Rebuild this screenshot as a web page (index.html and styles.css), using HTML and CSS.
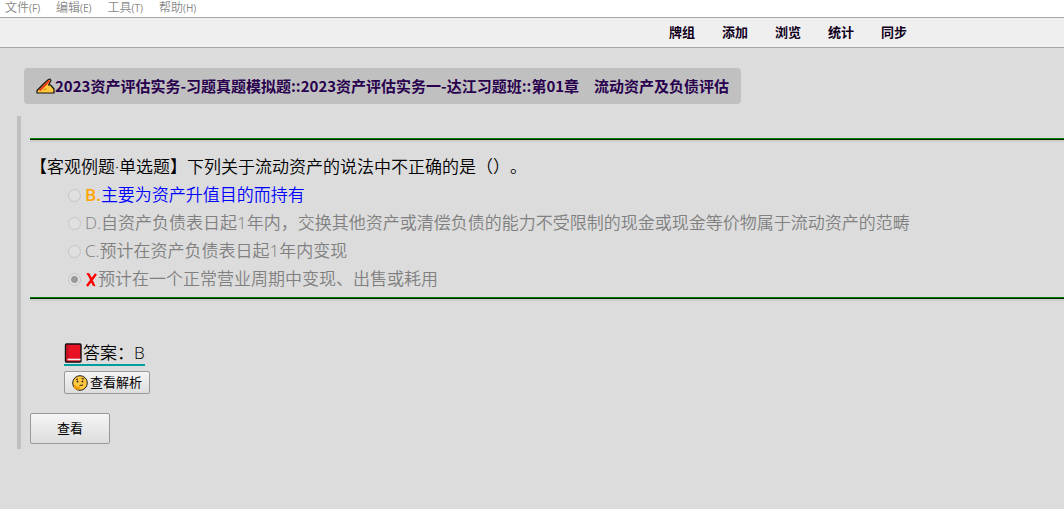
FILE: index.html
```html
<!DOCTYPE html>
<html lang="zh-CN">
<head>
    <meta charset="UTF-8">
    <meta name="viewport" content="width=device-width, initial-scale=1.0">
    <title>Anki</title>
    <link rel="stylesheet" href="styles.css">
</head>
<body>
    <header>
        <div class="menubar">
            <button type="button">文件<small>(F)</small></button>
            <button type="button">编辑<small>(E)</small></button>
            <button type="button">工具<small>(T)</small></button>
            <button type="button">帮助<small>(H)</small></button>
        </div>
        <nav class="toolbar">
            <a href="#">牌组</a>
            <a href="#">添加</a>
            <a href="#">浏览</a>
            <a href="#">统计</a>
            <a href="#">同步</a>
        </nav>
    </header>

    <main>
        <a class="deck" href="#">
            <svg class="icon" viewBox="0 0 19 18" aria-hidden="true">
                <path d="M1 16V13.500L8 6.500l4.500-4 1.500-.5 1 1.500-2.500 4.500h2l3.500 4V16z" fill="#ffc83d" stroke="#111" stroke-width="1.200" stroke-linejoin="round"/>
                <path d="M3.500 13.500 13.500 3.500" stroke="#e8381c" stroke-width="2"/>
                <path d="M7.500 12.500l3-.5" stroke="#d67d00" stroke-width="1" fill="none"/>
            </svg>
            <span>2023资产评估实务-习题真题模拟题::2023资产评估实务一-达江习题班::第01章　流动资产及负债评估</span>
        </a>

        <div class="card">
            <hr>
            <fieldset class="question">
                <legend>【客观例题·单选题】下列关于流动资产的说法中不正确的是（）。</legend>
                <label class="option correct">
                    <input type="radio" name="answer" disabled>
                    <span><b>B.</b>主要为资产升值目的而持有</span>
                </label>
                <label class="option">
                    <input type="radio" name="answer" disabled>
                    <span>D.自资产负债表日起1年内，交换其他资产或清偿负债的能力不受限制的现金或现金等价物属于流动资产的范畴</span>
                </label>
                <label class="option">
                    <input type="radio" name="answer" disabled>
                    <span>C.预计在资产负债表日起1年内变现</span>
                </label>
                <label class="option">
                    <input type="radio" name="answer" checked disabled>
                    <svg class="cross" viewBox="0 0 13 16" aria-hidden="true">
                        <path d="M2 3.500Q3.500 2.500 4.500 5L8 12.500Q8.500 14.500 10 14M11 3 2 15" fill="none" stroke="#f00" stroke-width="2.400"/>
                    </svg>
                    <span>预计在一个正常营业周期中变现、出售或耗用</span>
                </label>
            </fieldset>
            <hr>

            <div class="result">
                <p class="answer">
                    <svg class="book" viewBox="0 0 19 20" aria-hidden="true">
                        <rect x="1.500" y="1" width="15.500" height="18" rx="1" fill="#e81224" stroke="#111" stroke-width="1.400"/>
                        <path d="M4 1.500v14" stroke="#a80d1a" stroke-width="1"/>
                        <path d="M3.500 16.500h13" stroke="#f2f2f2" stroke-width="1.600"/>
                    </svg>
                    <span>答案：B</span>
                </p>
                <button type="button" class="explain">
                    <svg class="face" viewBox="0 0 16 16" aria-hidden="true">
                        <circle cx="8" cy="8" r="7.300" fill="#ffc83d" stroke="#222" stroke-width="1"/>
                        <circle cx="5.500" cy="6.500" r=".9" fill="#222"/>
                        <circle cx="10.500" cy="6.500" r=".9" fill="#222"/>
                        <path d="M4 4.500 6 4M9.500 3.500l2.500.5M7.500 10.500l3.500-.5" stroke="#222" stroke-width="1" fill="none"/>
                        <path d="M2 13.500v-3l1.500-.5 1 1.500 3.500.5v1L6 15z" fill="#f59b00"/>
                    </svg>
                    <span>查看解析</span>
                </button>
            </div>

            <button type="button" class="view">查看</button>
        </div>
    </main>
</body>
</html>
```
FILE: styles.css
```css
:root {
    --background-color: #dcdcdc;
    --border-color: #a6a6a6;
    --bar-color: #c0c0c0;
    --muted-color: #808080;
}

* {
    margin: 0;
    padding: 0;
    box-sizing: border-box;
}

body {
    font-family: "Open Sans", "Noto Sans CJK SC", sans-serif;
    background-color: var(--background-color);
    color: #000;
    overflow-x: hidden;
    text-spacing-trim: space-all;
}

button {
    font-family: inherit;
    color: inherit;
}

svg {
    flex: none;
}

/* Menu and toolbar */
.menubar {
    display: flex;
    align-items: flex-start;
    gap: 16px;
    height: 17px;
    padding-left: 5px;
    background: #fff;
}

.menubar button {
    border: none;
    background: none;
    color: #888;
    font-size: 12px;
    line-height: 15px;
    font-weight: 350;
}

.menubar small {
    font-size: 10px;
    font-weight: 400;
}

.toolbar {
    display: flex;
    justify-content: flex-end;
    gap: 27px;
    padding-right: 157px;
    background: #efefef;
    border-top: 1px solid var(--border-color);
    border-bottom: 1px solid var(--border-color);
}

.toolbar a {
    color: #10001c;
    font-size: 13px;
    font-weight: bold;
    line-height: 29px;
    text-decoration: none;
}

/* Deck name */
main {
    padding: 20px 0 0 17px;
}

.deck {
    display: inline-flex;
    align-items: center;
    margin-left: 7px;
    padding: 0 12px;
    border-radius: 4px;
    background: var(--bar-color);
    color: #28004d;
    font-family: "Noto Sans CJK SC", sans-serif;
    font-size: 15px;
    font-weight: bold;
    line-height: 36px;
    text-decoration: none;
    white-space: nowrap;
}

.icon {
    width: 19px;
    height: 18px;
}

/* Card */
.card {
    margin-top: 12px;
    padding: 22px 0 5px 9px;
    border-left: 4px solid var(--bar-color);
}

hr {
    height: 2px;
    border: none;
    border-top: 1px solid #008000;
    background: #002800;
    box-shadow: 0 2px 1px #ccc;
}

.question {
    border: none;
    padding: 13px 0 4px;
    font-size: 17px;
    font-weight: 350;
    line-height: 28px;
}

.question legend {
    float: left;
    width: 100%;
}

.option {
    display: flex;
    align-items: center;
    clear: both;
    padding-left: 38px;
    color: var(--muted-color);
    white-space: nowrap;
}

.option input {
    appearance: none;
    width: 13px;
    height: 13px;
    margin-right: 4px;
    flex: none;
    border: 1px solid #c6c6c6;
    border-radius: 50%;
    background: #e0e0e0;
}

.option input:checked {
    background: radial-gradient(circle, #999 3px, #e0e0e0 4px);
}

.correct {
    color: #00f;
}

.correct b {
    color: #ffa500;
    font-weight: 600;
}

.cross {
    width: 13px;
    height: 16px;
}

.result {
    display: flex;
    flex-direction: column;
    align-items: flex-start;
    gap: 5px;
    padding: 42px 0 19px 34px;
}

.answer {
    display: flex;
    align-items: center;
    border-bottom: 2px solid #009e9e;
    font-size: 17px;
    font-weight: 350;
    line-height: 23px;
}

.book {
    width: 19px;
    height: 20px;
}

.explain,
.view {
    border: 1px solid #999;
    border-radius: 2px;
    background: linear-gradient(#f5f5f5, #ddd);
    font-size: 13px;
}

.explain {
    display: flex;
    align-items: center;
    gap: 2px;
    padding: 0 7px;
    line-height: 21px;
}

.face {
    width: 16px;
    height: 16px;
}

.view {
    display: block;
    padding: 0 26px;
    line-height: 29px;
}
```
